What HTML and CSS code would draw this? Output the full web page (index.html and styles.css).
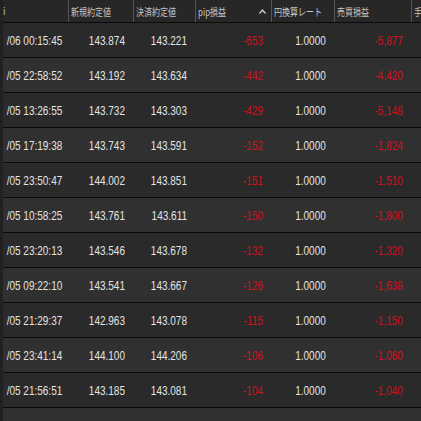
FILE: index.html
```html
<!DOCTYPE html>
<html lang="ja">
<head>
<meta charset="utf-8">
<link rel="stylesheet" href="styles.css">
</head>
<body>
<div class="view">
  <div class="row head">
    <div class="hc c1"><span class="clip">i</span></div>
    <div class="hc"><span class="lbl">新規約定値</span></div>
    <div class="hc"><span class="lbl">決済約定値</span></div>
    <div class="hc sort"><span class="lbl">pip損益</span><svg class="caret" width="7" height="5" viewBox="0 0 7 5"><path d="M0.5 4.5 L3.5 1 L6.5 4.5" fill="none" stroke="#cfcfcf" stroke-width="1.2"/></svg></div>
    <div class="hc"><span class="lbl">円換算レート</span></div>
    <div class="hc"><span class="lbl">売買損益</span></div>
    <div class="hc last"><span class="lbl">手数料</span></div>
  </div>

  <div class="row"><div class="dc date"><span>/06 00:15:45</span></div><div class="dc"><span>143.874</span></div><div class="dc"><span>143.221</span></div><div class="dc neg"><span>-653</span></div><div class="dc"><span>1.0000</span></div><div class="dc neg"><span>-5,877</span></div><div class="dc last"></div></div>
  <div class="row"><div class="dc date"><span>/05 22:58:52</span></div><div class="dc"><span>143.192</span></div><div class="dc"><span>143.634</span></div><div class="dc neg"><span>-442</span></div><div class="dc"><span>1.0000</span></div><div class="dc neg"><span>-4,420</span></div><div class="dc last"></div></div>
  <div class="row"><div class="dc date"><span>/05 13:26:55</span></div><div class="dc"><span>143.732</span></div><div class="dc"><span>143.303</span></div><div class="dc neg"><span>-429</span></div><div class="dc"><span>1.0000</span></div><div class="dc neg"><span>-5,148</span></div><div class="dc last"></div></div>
  <div class="row"><div class="dc date"><span>/05 17:19:38</span></div><div class="dc"><span>143.743</span></div><div class="dc"><span>143.591</span></div><div class="dc neg"><span>-152</span></div><div class="dc"><span>1.0000</span></div><div class="dc neg"><span>-1,824</span></div><div class="dc last"></div></div>
  <div class="row"><div class="dc date"><span>/05 23:50:47</span></div><div class="dc"><span>144.002</span></div><div class="dc"><span>143.851</span></div><div class="dc neg"><span>-151</span></div><div class="dc"><span>1.0000</span></div><div class="dc neg"><span>-1,510</span></div><div class="dc last"></div></div>
  <div class="row"><div class="dc date"><span>/05 10:58:25</span></div><div class="dc"><span>143.761</span></div><div class="dc"><span>143.611</span></div><div class="dc neg"><span>-150</span></div><div class="dc"><span>1.0000</span></div><div class="dc neg"><span>-1,800</span></div><div class="dc last"></div></div>
  <div class="row"><div class="dc date"><span>/05 23:20:13</span></div><div class="dc"><span>143.546</span></div><div class="dc"><span>143.678</span></div><div class="dc neg"><span>-132</span></div><div class="dc"><span>1.0000</span></div><div class="dc neg"><span>-1,320</span></div><div class="dc last"></div></div>
  <div class="row"><div class="dc date"><span>/05 09:22:10</span></div><div class="dc"><span>143.541</span></div><div class="dc"><span>143.667</span></div><div class="dc neg"><span>-126</span></div><div class="dc"><span>1.0000</span></div><div class="dc neg"><span>-1,638</span></div><div class="dc last"></div></div>
  <div class="row"><div class="dc date"><span>/05 21:29:37</span></div><div class="dc"><span>142.963</span></div><div class="dc"><span>143.078</span></div><div class="dc neg"><span>-115</span></div><div class="dc"><span>1.0000</span></div><div class="dc neg"><span>-1,150</span></div><div class="dc last"></div></div>
  <div class="row"><div class="dc date"><span>/05 23:41:14</span></div><div class="dc"><span>144.100</span></div><div class="dc"><span>144.206</span></div><div class="dc neg"><span>-106</span></div><div class="dc"><span>1.0000</span></div><div class="dc neg"><span>-1,060</span></div><div class="dc last"></div></div>
  <div class="row"><div class="dc date"><span>/05 21:56:51</span></div><div class="dc"><span>143.185</span></div><div class="dc"><span>143.081</span></div><div class="dc neg"><span>-104</span></div><div class="dc"><span>1.0000</span></div><div class="dc neg"><span>-1,040</span></div><div class="dc last"></div></div>
  <div class="row"><div class="dc date"><span>/05 20:12:06</span></div><div class="dc"><span>143.302</span></div><div class="dc"><span>143.199</span></div><div class="dc neg"><span>-103</span></div><div class="dc"><span>1.0000</span></div><div class="dc neg"><span>-1,030</span></div><div class="dc last"></div></div>
</div>
</body>
</html>
```

FILE: styles.css
```css
html, body {
  margin: 0;
  padding: 0;
  background: #212121;
  overflow: hidden;
}

.view {
  width: 421px;
  height: 421px;
  overflow: hidden;
  padding-left: 3px;
  box-sizing: border-box;
  font-family: "Liberation Sans", Arial, sans-serif;
  font-size: 13px;
  color: #e4e4e4;
}

.row {
  display: grid;
  grid-template-columns: 66px 65px 62px 76px 63px 77px 60px;
  height: 34px;
  border-bottom: 1px solid #0b0b0b;
  background: #2a2a2a;
}

.row:nth-child(odd) {
  background: #303030;
}

.row.head {
  height: 22px;
  background: #272727;
}

.hc {
  display: flex;
  align-items: center;
  padding-left: 2px;
  overflow: hidden;
  white-space: nowrap;
  color: #c4c4c4;
  border-right: 1px solid #555555;
  font-family: "Noto Sans CJK JP", "Liberation Sans", sans-serif;
  font-size: 10.5px;
}

.hc.last {
  border-right: none;
}

.hc.c1 {
  padding-left: 0;
}

.clip {
  font-family: "Liberation Sans", sans-serif;
  font-size: 11px;
  color: #c8c8c8;
  transform: scaleX(0.8);
}

.lbl {
  display: inline-block;
  transform: scaleX(0.76);
  transform-origin: left center;
}

.hc.sort {
  justify-content: space-between;
  padding-right: 5px;
}

.caret {
  display: block;
}

.dc {
  display: flex;
  align-items: center;
  justify-content: flex-end;
  padding-right: 9px;
  overflow: hidden;
  white-space: nowrap;
}

.dc span {
  display: inline-block;
  transform: scaleX(0.77);
  transform-origin: right center;
}

.dc.date {
  padding-right: 7px;
}

.dc.last {
  padding-right: 0;
}

.neg {
  color: #d4101e;
}
```
